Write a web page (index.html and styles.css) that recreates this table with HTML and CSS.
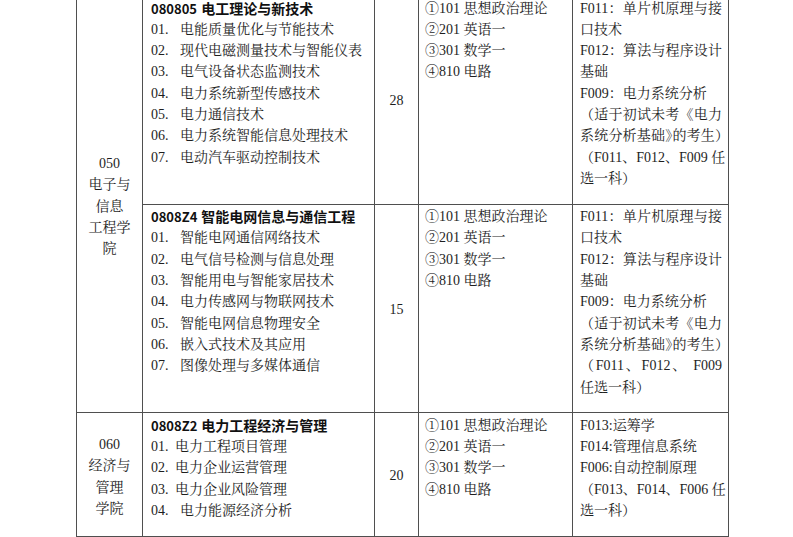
FILE: index.html
```html
<!DOCTYPE html>
<html lang="zh-CN">
<head>
<meta charset="utf-8">
<title>招生专业目录</title>
<link rel="stylesheet" href="styles.css">
</head>
<body>
<table class="plan">
  <colgroup>
    <col class="c-dept">
    <col class="c-major">
    <col class="c-count">
    <col class="c-exam">
    <col class="c-retest">
  </colgroup>
  <tbody>
    <tr>
      <td class="dept" rowspan="2">050<br>电子与<br>信息<br>工程学<br>院</td>
      <td class="major">
        <div class="title"><span class="code">080805</span> 电工理论与新技术</div>
        <div class="item"><span class="no">01.</span>电能质量优化与节能技术</div>
        <div class="item"><span class="no">02.</span>现代电磁测量技术与智能仪表</div>
        <div class="item"><span class="no">03.</span>电气设备状态监测技术</div>
        <div class="item"><span class="no">04.</span>电力系统新型传感技术</div>
        <div class="item"><span class="no">05.</span>电力通信技术</div>
        <div class="item"><span class="no">06.</span>电力系统智能信息处理技术</div>
        <div class="item"><span class="no">07.</span>电动汽车驱动控制技术</div>
      </td>
      <td class="count">28</td>
      <td class="exam">
        <div>①101 思想政治理论</div>
        <div>②201 英语一</div>
        <div>③301 数学一</div>
        <div>④810 电路</div>
      </td>
      <td class="retest">
        <div class="full">F011：单片机原理与接</div>
        <div>口技术</div>
        <div class="full">F012：算法与程序设计</div>
        <div>基础</div>
        <div>F009：电力系统分析</div>
        <div class="full">（适于初试未考《电力</div>
        <div class="full">系统分析基础<span class="half">》</span>的考生<span class="half">）</span></div>
        <div class="full">（F011、F012、F009 任</div>
        <div>选一科）</div>
      </td>
    </tr>
    <tr>
      <td class="major">
        <div class="title"><span class="code">0808Z4</span> 智能电网信息与通信工程</div>
        <div class="item"><span class="no">01.</span>智能电网通信网络技术</div>
        <div class="item"><span class="no">02.</span>电气信号检测与信息处理</div>
        <div class="item"><span class="no">03.</span>智能用电与智能家居技术</div>
        <div class="item"><span class="no">04.</span>电力传感网与物联网技术</div>
        <div class="item"><span class="no">05.</span>智能电网信息物理安全</div>
        <div class="item"><span class="no">06.</span>嵌入式技术及其应用</div>
        <div class="item"><span class="no">07.</span>图像处理与多媒体通信</div>
      </td>
      <td class="count">15</td>
      <td class="exam">
        <div>①101 思想政治理论</div>
        <div>②201 英语一</div>
        <div>③301 数学一</div>
        <div>④810 电路</div>
      </td>
      <td class="retest">
        <div class="full">F011：单片机原理与接</div>
        <div>口技术</div>
        <div class="full">F012：算法与程序设计</div>
        <div>基础</div>
        <div>F009：电力系统分析</div>
        <div class="full">（适于初试未考《电力</div>
        <div class="full">系统分析基础<span class="half">》</span>的考生<span class="half">）</span></div>
        <div class="full">（F011、F012、 F009</div>
        <div>任选一科）</div>
      </td>
    </tr>
    <tr>
      <td class="dept">060<br>经济与<br>管理<br>学院</td>
      <td class="major">
        <div class="title"><span class="code">0808Z2</span> 电力工程经济与管理</div>
        <div class="item"><span class="no no-short">01.</span>电力工程项目管理</div>
        <div class="item"><span class="no no-short">02.</span>电力企业运营管理</div>
        <div class="item"><span class="no no-short">03.</span>电力企业风险管理</div>
        <div class="item"><span class="no">04.</span>电力能源经济分析</div>
      </td>
      <td class="count">20</td>
      <td class="exam">
        <div>①101 思想政治理论</div>
        <div>②201 英语一</div>
        <div>③301 数学一</div>
        <div>④810 电路</div>
      </td>
      <td class="retest">
        <div>F013:运筹学</div>
        <div>F014:管理信息系统</div>
        <div>F006:自动控制原理</div>
        <div class="full">（F013、F014、F006 任</div>
        <div>选一科）</div>
      </td>
    </tr>
  </tbody>
</table>
</body>
</html>
```

FILE: styles.css
```css
html, body {
  margin: 0;
  padding: 0;
  background: #ffffff;
}

body {
  font-family: "Liberation Serif", "Noto Serif CJK SC", "Noto Sans CJK SC", serif;
  font-size: 14px;
  line-height: 21.3px;
  color: #1e1e1e;
  overflow: hidden;
}

.plan {
  border-collapse: collapse;
  table-layout: fixed;
  width: 652px;
  margin: -5px 0 0 76px;
}

.c-dept { width: 66px; }
.c-major { width: 232px; }
.c-count { width: 44px; }
.c-exam { width: 154px; }
.c-retest { width: 156px; }

.plan td {
  border: 1px solid #4f4f4f;
  padding: 1.5px 7px 14.5px 7px;
  vertical-align: top;
  white-space: nowrap;
}

.plan td.dept {
  text-align: center;
  vertical-align: middle;
  padding: 4px 2px 0 2px;
}

.plan td.count {
  text-align: center;
  vertical-align: middle;
  padding: 2px 2px 0 2px;
}

.plan td.major {
  padding-left: 8px;
}

.plan td.exam {
  padding-left: 6px;
}

.title {
  font-family: "Noto Sans CJK SC", "Liberation Sans", sans-serif;
  font-weight: 700;
  color: #111111;
}

.title .code {
  display: inline-block;
  width: 47px;
  font-size: 13px;
}

.item .no {
  display: inline-block;
  width: 29px;
}

.item .no.no-short {
  width: 24px;
}

.retest .full {
  text-align: justify;
  text-align-last: justify;
  margin-right: -1px;
}

.half {
  font-feature-settings: "halt" 1;
}
```
